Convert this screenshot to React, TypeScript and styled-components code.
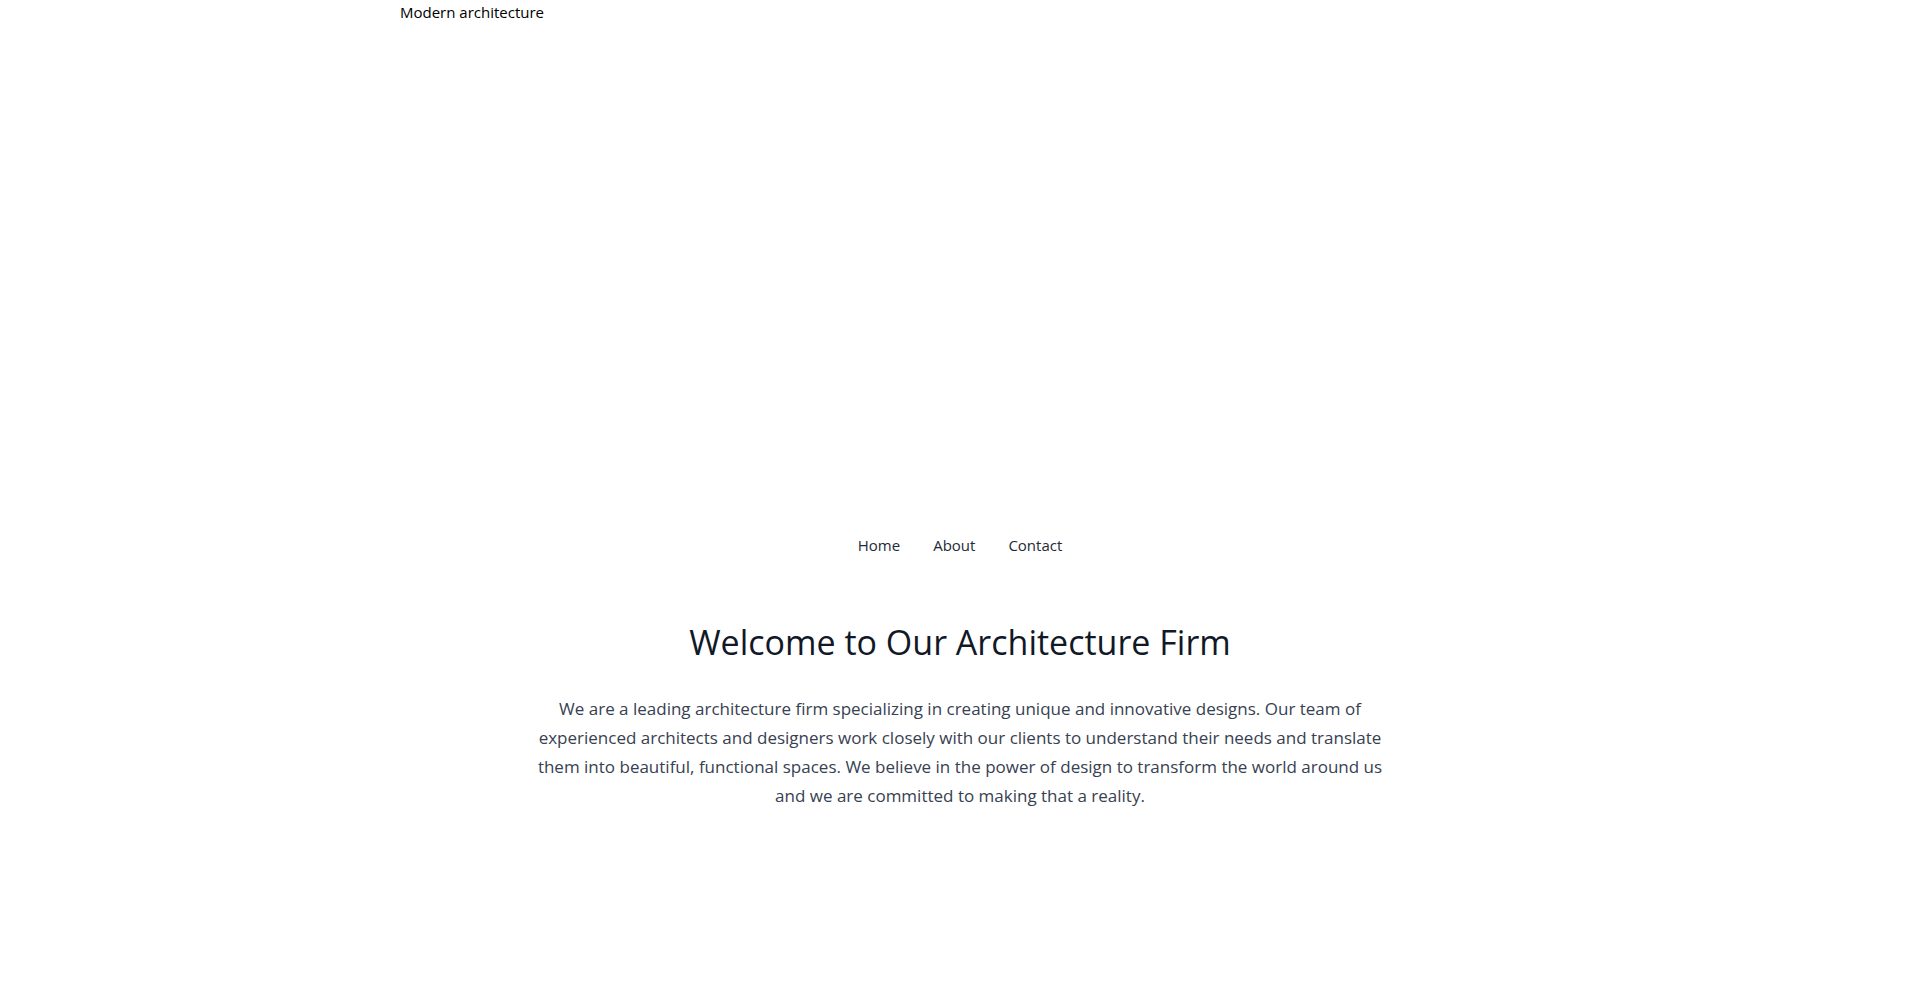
import styled, { createGlobalStyle } from 'styled-components';

const GlobalStyle = createGlobalStyle`
  body {
    margin: 0;
    background: #fff;
    font-family: 'Open Sans', 'Noto Sans', sans-serif;
  }
`;

const PageWrapper = styled.div`
  width: 100%;
  min-height: 995px;
`;

const HeroWrapper = styled.div`
  max-width: 1120px;
  margin: 0 auto;
`;

// 이미지가 깨진 상태라 alt 텍스트만 보이는 영역
const HeroImage = styled.div`
  height: 500px;
  font-size: 15px;
  line-height: 24px;
  color: #000;
`;

const NavBar = styled.nav`
  display: flex;
  justify-content: center;
  gap: 33px;
  padding: 33px 0;
`;

const NavLink = styled.a`
  font-size: 15px;
  line-height: 24px;
  color: #1f2937;
  text-decoration: none;
  cursor: pointer;
`;

const MainSection = styled.section`
  max-width: 864px;
  margin: 32px auto 0 auto;
  text-align: center;
`;

const Title = styled.h1`
  margin: 0 0 32px 0;
  font-size: 34px;
  line-height: 40px;
  font-weight: 400;
  color: #111827;
`;

const Description = styled.p`
  margin: 0;
  font-size: 17px;
  line-height: 29px;
  color: #374151;
`;

const navItems = ['Home', 'About', 'Contact'];

const App = () => {
  return (
    <PageWrapper>
      <GlobalStyle />
      <HeroWrapper>
        <HeroImage role="img" aria-label="Modern architecture">
          Modern architecture
        </HeroImage>
      </HeroWrapper>
      <NavBar>
        {navItems.map((item) => (
          <NavLink key={item}>{item}</NavLink>
        ))}
      </NavBar>
      <MainSection>
        <Title>Welcome to Our Architecture Firm</Title>
        <Description>
          We are a leading architecture firm specializing in creating unique and
          innovative designs. Our team of experienced architects and designers
          work closely with our clients to understand their needs and translate
          them into beautiful, functional spaces. We believe in the power of
          design to transform the world around us and we are committed to making
          that a reality.
        </Description>
      </MainSection>
    </PageWrapper>
  );
};

export default App;
